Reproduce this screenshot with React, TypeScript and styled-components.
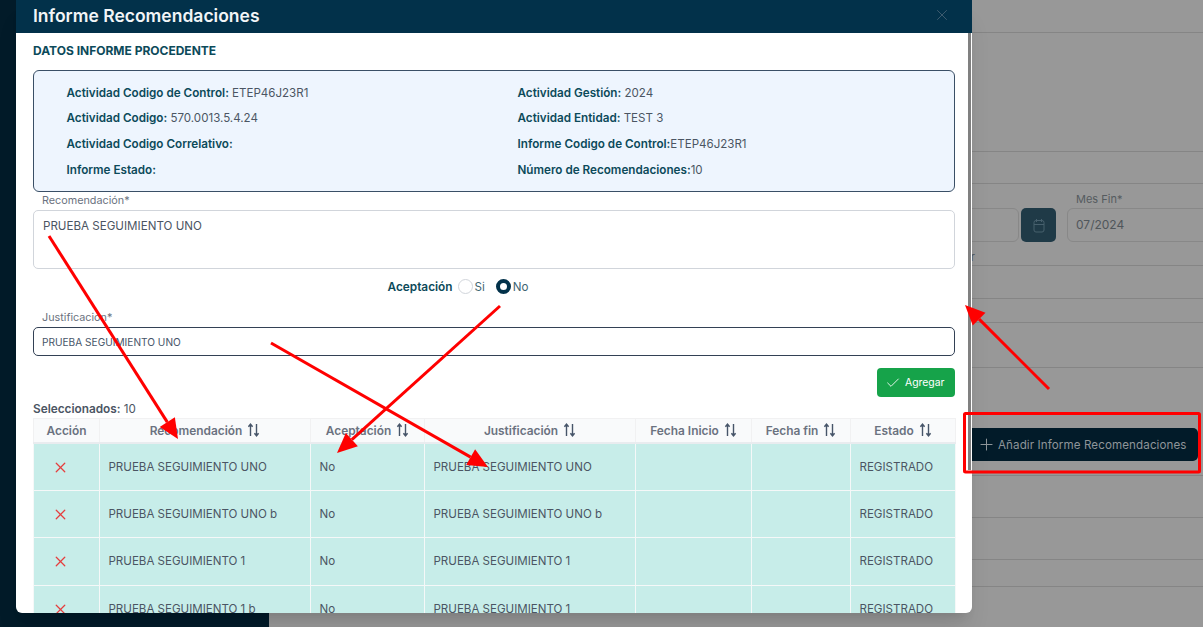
import React from 'react';
import styled, { createGlobalStyle } from 'styled-components';
import { Check, Plus, X } from 'lucide-react';

const GlobalStyle = createGlobalStyle`
    html, body {
        margin: 0;
        padding: 0;
        background: #989898;
        font-family: Inter, "Liberation Sans", sans-serif;
    }
    * {
        box-sizing: border-box;
    }
`;

interface IRow {
    recomendacion: string;
    justificacion: string;
}

const rows: IRow[] = [
    { recomendacion: 'PRUEBA SEGUIMIENTO UNO', justificacion: 'PRUEBA SEGUIMIENTO UNO' },
    { recomendacion: 'PRUEBA SEGUIMIENTO UNO b', justificacion: 'PRUEBA SEGUIMIENTO UNO b' },
    { recomendacion: 'PRUEBA SEGUIMIENTO 1', justificacion: 'PRUEBA SEGUIMIENTO 1' },
    { recomendacion: 'PRUEBA SEGUIMIENTO 1 b', justificacion: 'PRUEBA SEGUIMIENTO 1' },
];

const columns = [
    { title: 'Acción', width: 66, sortable: false },
    { title: 'Recomendación', width: 211, sortable: true },
    { title: 'Aceptación', width: 114, sortable: true },
    { title: 'Justificación', width: 211, sortable: true },
    { title: 'Fecha Inicio', width: 116, sortable: true },
    { title: 'Fecha fin', width: 99, sortable: true },
    { title: 'Estado', width: 105, sortable: true },
];

const pageLines = [33, 119, 32, 81, 33, 24, 45, 108, 42, 42, 27];

const SortIcon = () => (
    <SortSvg viewBox="0 0 13 14" width="13" height="14">
        <path d="M3.5 13V1.6M1.4 3.8 3.5 1.2l2.1 2.6" />
        <path d="M9.5 1v11.4M7.4 10.2l2.1 2.6 2.1-2.6" />
    </SortSvg>
);

const CalendarIcon = () => (
    <CalendarSvg viewBox="0 0 12 15" width="12" height="15">
        <rect x="1" y="2.5" width="10" height="11.5" rx="2" />
        <path d="M1 6.5h10M3.5 1v3M8.5 1v3" />
    </CalendarSvg>
);

const Arrow: React.FC<{ x1: number; y1: number; x2: number; y2: number }> = ({ x1, y1, x2, y2 }) => {
    const len = Math.hypot(x2 - x1, y2 - y1);
    const ux = (x2 - x1) / len;
    const uy = (y2 - y1) / len;
    const bx = x2 - ux * 20;
    const by = y2 - uy * 20;
    const points = `${x2},${y2} ${bx - uy * 9},${by + ux * 9} ${bx + uy * 9},${by - ux * 9}`;
    return (
        <g>
            <line x1={x1} y1={y1} x2={bx} y2={by} stroke="#ff0000" strokeWidth="3" />
            <polygon points={points} fill="#ff0000" />
        </g>
    );
};

const App: React.FC = () => {
    return (
        <Page>
            <GlobalStyle />
            <Sidebar />
            <Main>
                {pageLines.map((height, i) => (
                    <PageRow key={i} $height={height}>
                        {i === 3 && (
                            <FilterArea>
                                <FilterFields>
                                    <DateField>
                                        <FieldLabel>Mes Inicio*</FieldLabel>
                                        <DateInputs>
                                            <DateBox>01/2024</DateBox>
                                            <CalendarButton>
                                                <CalendarIcon />
                                            </CalendarButton>
                                        </DateInputs>
                                    </DateField>
                                    <EndField>
                                        <FieldLabel>Mes Fin*</FieldLabel>
                                        <DateBox>07/2024</DateBox>
                                    </EndField>
                                </FilterFields>
                                <Hint>Periodo a evaluar</Hint>
                            </FilterArea>
                        )}
                        {i === 7 && (
                            <AddButton>
                                <Plus size={19} strokeWidth={1.3} />
                                Añadir Informe Recomendaciones
                            </AddButton>
                        )}
                    </PageRow>
                ))}
            </Main>

            <Modal>
                <ModalHeader>
                    <ModalTitle>Informe Recomendaciones</ModalTitle>
                    <CloseIcon size={18} strokeWidth={1.3} />
                </ModalHeader>
                <ModalBody>
                    <SectionTitle>DATOS INFORME PROCEDENTE</SectionTitle>
                    <InfoBox>
                        <InfoItem><b>Actividad Codigo de Control:</b> ETEP46J23R1</InfoItem>
                        <InfoItem><b>Actividad Gestión:</b> 2024</InfoItem>
                        <InfoItem><b>Actividad Codigo:</b> 570.0013.5.4.24</InfoItem>
                        <InfoItem><b>Actividad Entidad:</b> TEST 3</InfoItem>
                        <InfoItem><b>Actividad Codigo Correlativo:</b></InfoItem>
                        <InfoItem><b>Informe Codigo de Control:</b>ETEP46J23R1</InfoItem>
                        <InfoItem><b>Informe Estado:</b></InfoItem>
                        <InfoItem><b>Número de Recomendaciones:</b>10</InfoItem>
                    </InfoBox>

                    <FloatLabel>Recomendación*</FloatLabel>
                    <TextArea readOnly value="PRUEBA SEGUIMIENTO UNO" />

                    <RadioRow>
                        <RadioTitle>Aceptación</RadioTitle>
                        <RadioOption>
                            <Radio />
                            Si
                        </RadioOption>
                        <RadioOption>
                            <Radio $checked />
                            No
                        </RadioOption>
                    </RadioRow>

                    <FloatLabel>Justificación*</FloatLabel>
                    <TextInput readOnly value="PRUEBA SEGUIMIENTO UNO" />

                    <ActionRow>
                        <SaveButton>
                            <Check size={16} strokeWidth={1.3} />
                            Agregar
                        </SaveButton>
                    </ActionRow>

                    <Selected><b>Seleccionados:</b> 10</Selected>

                    <Table>
                        <colgroup>
                            {columns.map((col) => (
                                <col key={col.title} style={{ width: col.width }} />
                            ))}
                        </colgroup>
                        <thead>
                            <tr>
                                {columns.map((col) => (
                                    <HeadCell key={col.title}>
                                        <HeadInner>
                                            {col.title}
                                            {col.sortable && <SortIcon />}
                                        </HeadInner>
                                    </HeadCell>
                                ))}
                            </tr>
                        </thead>
                        <tbody>
                            {rows.map((row, i) => (
                                <tr key={i}>
                                    <ActionCell><RemoveIcon size={17} strokeWidth={1.8} /></ActionCell>
                                    <Cell>{row.recomendacion}</Cell>
                                    <Cell>No</Cell>
                                    <Cell>{row.justificacion}</Cell>
                                    <Cell />
                                    <Cell />
                                    <Cell>REGISTRADO</Cell>
                                </tr>
                            ))}
                        </tbody>
                    </Table>
                </ModalBody>
                <ScrollThumb />
            </Modal>

            <Annotations viewBox="0 0 1203 627" width="1203" height="627">
                <Arrow x1={49} y1={236} x2={178} y2={439} />
                <Arrow x1={500} y1={306} x2={337} y2={453} />
                <Arrow x1={271} y1={343} x2={488} y2={467} />
                <Arrow x1={1049} y1={389} x2={965} y2={305} />
                <rect x="964.5" y="413.5" width="235" height="58.5" rx="1" fill="none" stroke="#ff0000" strokeWidth="3" />
            </Annotations>
        </Page>
    );
};

const Page = styled.div`
    position: relative;
    display: flex;
    width: 1203px;
    height: 627px;
    overflow: hidden;
    background: #989898;
`;

const Sidebar = styled.div`
    flex: 0 0 269px;
    background: #021b29;
`;

const Main = styled.div`
    flex: 1;
    display: flex;
    flex-direction: column;
    min-width: 0;
`;

const PageRow = styled.div<{ $height: number }>`
    flex: 0 0 ${({ $height }) => $height}px;
    display: flex;
    align-items: center;
    justify-content: flex-end;
    padding-right: 5px;
    border-bottom: 1px solid #858585;
`;

const FilterArea = styled.div`
    display: flex;
    flex-direction: column;
    align-self: stretch;
    width: 100%;
    margin-right: -5px;
    padding-top: 7px;
    overflow: hidden;
`;

const FilterFields = styled.div`
    display: flex;
    justify-content: flex-end;
    gap: 11px;
    margin-right: -16px;
`;

const DateField = styled.div`
    display: flex;
    flex-direction: column;
    gap: 2px;
    width: 200px;
`;

const EndField = styled(DateField)`
    width: 152px;
`;

const DateInputs = styled.div`
    display: flex;
    gap: 2px;
`;

const FieldLabel = styled.label`
    height: 15px;
    padding-left: 9px;
    font-size: 11px;
    line-height: 17px;
    color: #555b5f;
`;

const DateBox = styled.div`
    flex: 1;
    height: 34px;
    padding-left: 8px;
    border: 1px solid #888888;
    border-radius: 6px;
    font-size: 12px;
    line-height: 32px;
    color: #50565b;
`;

const CalendarButton = styled.div`
    flex: 0 0 35px;
    display: flex;
    align-items: center;
    justify-content: center;
    height: 34px;
    border-radius: 5px;
    background: #1f3a47;
`;

const CalendarSvg = styled.svg`
    fill: none;
    stroke: #47606d;
    stroke-width: 1;
`;

const Hint = styled.div`
    width: 701px;
    margin-top: 7px;
    font-size: 11px;
    line-height: 16px;
    text-align: right;
    color: #555b5f;
`;

const AddButton = styled.button`
    display: flex;
    align-items: center;
    gap: 2px;
    width: 236px;
    height: 33px;
    margin-top: 46px;
    padding: 0 0 0 15px;
    border: 0;
    border-radius: 5px;
    background: #021b29;
    font-family: inherit;
    font-size: 11.6px;
    letter-spacing: 0.1px;
    white-space: nowrap;
    color: #8e9599;
`;

const Modal = styled.div`
    position: absolute;
    top: 0;
    left: 16px;
    width: 956px;
    height: 613px;
    display: flex;
    flex-direction: column;
    overflow: hidden;
    border-radius: 0 0 6px 6px;
    background: #ffffff;
    box-shadow: 0 20px 25px -5px rgba(0, 0, 0, 0.1), 0 8px 10px -6px rgba(0, 0, 0, 0.1);
`;

const ModalHeader = styled.div`
    flex: 0 0 33px;
    display: flex;
    align-items: center;
    justify-content: space-between;
    padding: 0 21px 3px 17px;
    background: #02314a;
`;

const ModalTitle = styled.h2`
    margin: 0;
    font-size: 17.5px;
    font-weight: 600;
    color: #f2f5f7;
`;

const CloseIcon = styled(X)`
    color: #3f5d70;
`;

const ModalBody = styled.div`
    flex: 1;
    min-height: 0;
    overflow: hidden;
    padding: 0 17px;
`;

const ScrollThumb = styled.div`
    position: absolute;
    top: 33px;
    right: 1px;
    width: 3px;
    height: 437px;
    background: #808080;
`;

const SectionTitle = styled.h3`
    height: 37px;
    margin: 0;
    font-size: 12px;
    font-weight: 700;
    line-height: 35px;
    color: #0c4a5a;
`;

const InfoBox = styled.div`
    display: grid;
    grid-template-columns: 451px 1fr;
    grid-auto-rows: 25.6px;
    align-items: center;
    height: 122px;
    padding: 9px 32.5px 0;
    border: 1px solid #3a4f66;
    border-radius: 6px;
    background: #eef5fe;
`;

const InfoItem = styled.div`
    font-size: 11.55px;
    white-space: nowrap;
    color: #4b5563;

    b {
        font-size: 11.7px;
        font-weight: 600;
        color: #0c4a5a;
    }
`;

const FloatLabel = styled.label`
    display: block;
    height: 18px;
    padding-left: 9px;
    font-size: 10.8px;
    line-height: 18px;
    color: #6b7280;
`;

const TextArea = styled.textarea`
    display: block;
    width: 100%;
    height: 59px;
    padding: 8px 9px;
    border: 1px solid #d1d5db;
    border-radius: 5px;
    outline: none;
    resize: none;
    font-family: inherit;
    font-size: 11.6px;
    color: #4b5563;
`;

const RadioRow = styled.div`
    display: flex;
    align-items: center;
    justify-content: center;
    height: 35px;
    margin-bottom: 5px;
    padding-right: 72px;
    font-size: 12px;
`;

const RadioTitle = styled.span`
    margin-right: 5px;
    font-size: 11.8px;
    font-weight: 600;
    color: #0c4a5a;
`;

const RadioOption = styled.span`
    display: flex;
    align-items: center;
    gap: 2px;
    margin-right: 11px;
    font-size: 11.6px;
    color: #3f6572;

    &:last-child {
        margin-right: 0;
    }
`;

const Radio = styled.span<{ $checked?: boolean }>`
    display: inline-block;
    width: 15px;
    height: 15px;
    border-radius: 50%;
    ${({ $checked }) =>
        $checked
            ? 'border: 4.5px solid #02314a; background: #ffffff;'
            : 'border: 1px solid #d1d5db; background: #ffffff;'}
`;

const TextInput = styled.input`
    display: block;
    width: 100%;
    height: 29px;
    padding: 0 8px;
    border: 1px solid #334155;
    border-radius: 5px;
    outline: none;
    font-family: inherit;
    font-size: 10.15px;
    color: #475569;
`;

const ActionRow = styled.div`
    display: flex;
    justify-content: flex-end;
    margin-top: 12px;
`;

const SaveButton = styled.button`
    display: flex;
    align-items: center;
    gap: 4px;
    width: 78px;
    height: 29px;
    padding: 0 0 0 8px;
    border: 0;
    border-radius: 4px;
    background: #16a34a;
    font-family: inherit;
    font-size: 10.4px;
    color: #ffffff;
`;

const Selected = styled.div`
    height: 21px;
    padding-top: 5px;
    font-size: 11.6px;
    line-height: 14px;
    color: #4b5563;

    b {
        font-size: 11.8px;
        font-weight: 600;
    }
`;

const Table = styled.table`
    width: 922px;
    table-layout: fixed;
    border-collapse: collapse;
`;

const HeadCell = styled.th`
    height: 24.5px;
    padding: 0 0 1px;
    border: 1px solid #f1f1f2;
    border-bottom: 2px solid #e9ecef;
    background: #f9fafb;
    font-size: 11.9px;
    font-weight: 600;
    color: #6b7280;
`;

const HeadInner = styled.span`
    display: flex;
    align-items: center;
    justify-content: center;
    gap: 5px;
`;

const SortSvg = styled.svg`
    fill: none;
    stroke: #475569;
    stroke-width: 1.4;
`;

const Cell = styled.td`
    height: 47.4px;
    padding: 0 8.5px;
    border: 1px solid #f5f8f8;
    background: #c7ede9;
    font-size: 11.55px;
    white-space: nowrap;
    color: #4b5563;
`;

const ActionCell = styled(Cell)`
    padding: 4px 12px 0 0;
    text-align: center;
`;

const RemoveIcon = styled(X)`
    color: #e53e3e;
`;

const Annotations = styled.svg`
    position: absolute;
    top: 0;
    left: 0;
    pointer-events: none;
`;

export default App;
